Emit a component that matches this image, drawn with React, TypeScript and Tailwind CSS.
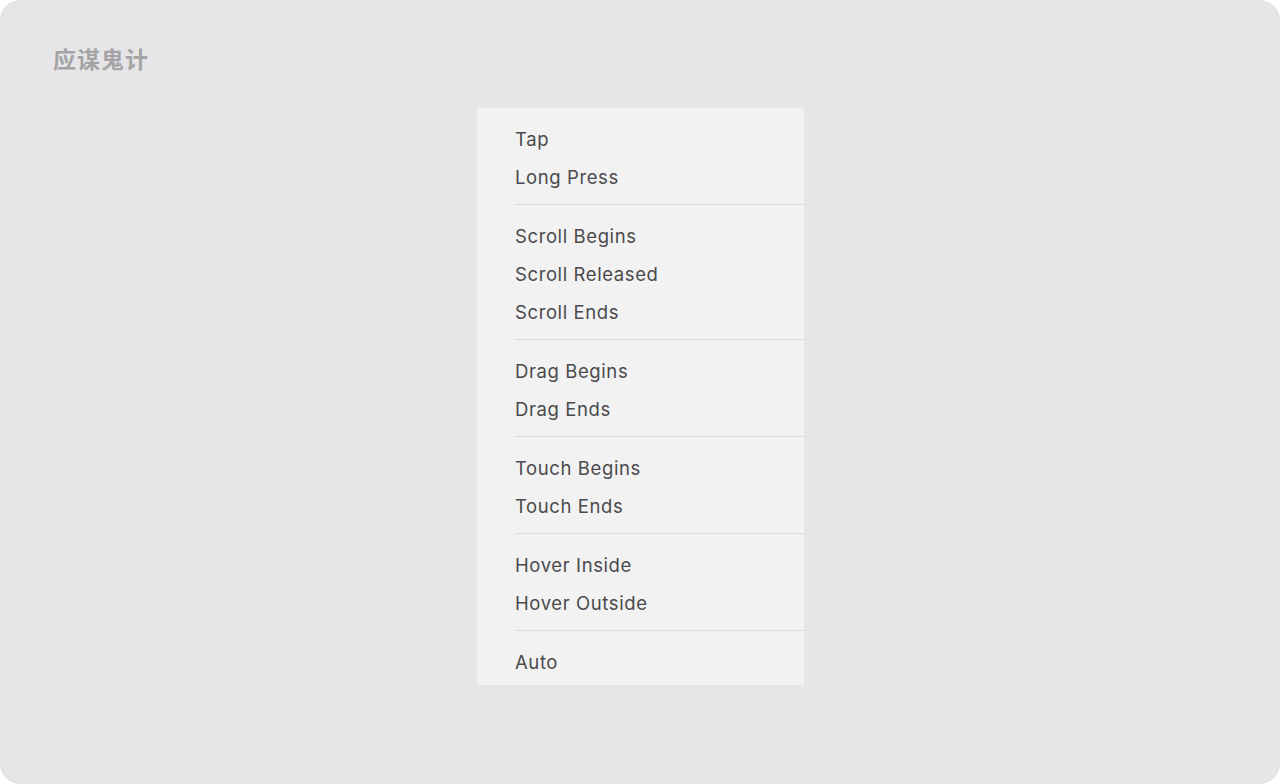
const groups: string[][] = [
  ['Tap', 'Long Press'],
  ['Scroll Begins', 'Scroll Released', 'Scroll Ends'],
  ['Drag Begins', 'Drag Ends'],
  ['Touch Begins', 'Touch Ends'],
  ['Hover Inside', 'Hover Outside'],
  ['Auto'],
];

export default function App() {
  return (
    <div className="w-[1280px] h-[784px] bg-white">
      <div className="w-full h-full rounded-[20px] bg-[#e6e6e8] relative">
        <div className="pt-[43px] pl-[53px] h-[108px]">
          <h1
            className="text-[23px] font-bold text-[#a4a4a6] leading-[30px] tracking-[1px]"
            style={{ fontFamily: '"Noto Sans CJK SC", serif' }}
          >
            应谋鬼计
          </h1>
        </div>
        <div
          className="ml-[477px] w-[327px] bg-[#f2f2f2] pb-[4px] text-[#4a4a4c]"
          style={{ fontFamily: 'Inter, "Liberation Sans", sans-serif' }}
        >
          {groups.map((items, i) => (
            <div
              key={i}
              className={
                i < groups.length - 1
                  ? 'pt-[12px] pb-[8px] border-b border-[#dcdcdc] ml-[38px]'
                  : 'pt-[12px] ml-[38px]'
              }
            >
              {items.map((label) => (
                <div
                  key={label}
                  className="h-[38px] flex items-center pt-[1px] text-[18.5px] tracking-[0.6px]"
                >
                  {label}
                </div>
              ))}
            </div>
          ))}
        </div>
      </div>
    </div>
  );
}
